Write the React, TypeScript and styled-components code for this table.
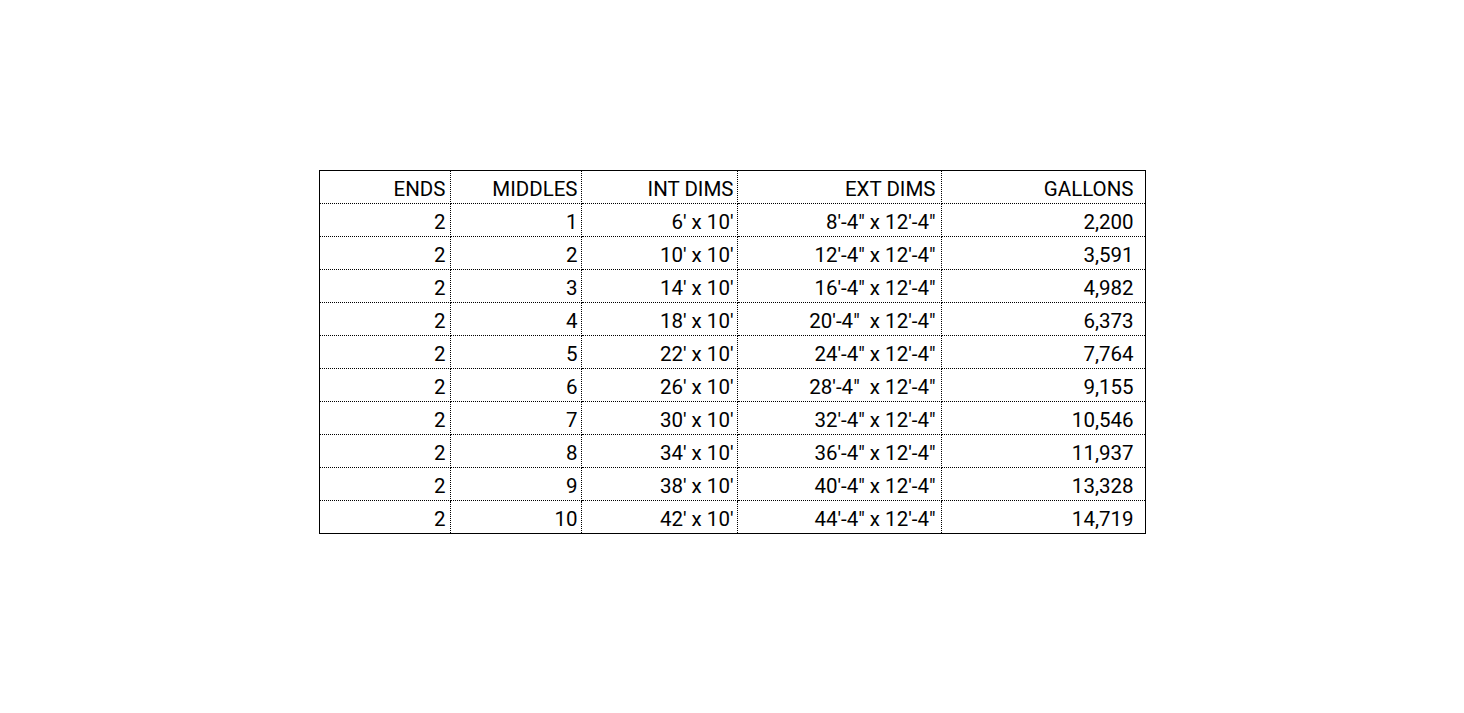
import React from 'react';
import styled, {createGlobalStyle} from 'styled-components';

const GlobalStyle = createGlobalStyle`
  html, body {
    margin: 0;
    padding: 0;
    background: #ffffff;
  }
`

type RowType = [string, string, string, string, string]

const header: RowType = ['ENDS', 'MIDDLES', 'INT DIMS', 'EXT DIMS', 'GALLONS']

const rows: RowType[] = [
    ['2', '1', "6' x 10'", `8'-4" x 12'-4"`, '2,200'],
    ['2', '2', "10' x 10'", `12'-4" x 12'-4"`, '3,591'],
    ['2', '3', "14' x 10'", `16'-4" x 12'-4"`, '4,982'],
    ['2', '4', "18' x 10'", `20'-4"  x 12'-4"`, '6,373'],
    ['2', '5', "22' x 10'", `24'-4" x 12'-4"`, '7,764'],
    ['2', '6', "26' x 10'", `28'-4"  x 12'-4"`, '9,155'],
    ['2', '7', "30' x 10'", `32'-4" x 12'-4"`, '10,546'],
    ['2', '8', "34' x 10'", `36'-4" x 12'-4"`, '11,937'],
    ['2', '9', "38' x 10'", `40'-4" x 12'-4"`, '13,328'],
    ['2', '10', "42' x 10'", `44'-4" x 12'-4"`, '14,719'],
]

const widths = [131, 131, 156, 204, 204]
const pads = [4, 3, 3, 5, 11]

const Page = styled.div`
  display: flex;
  justify-content: center;
  align-items: flex-start;
  padding-top: 170px;
  height: 713px;
  box-sizing: border-box;
`

const Sheet = styled.table`
  border-collapse: collapse;
  table-layout: fixed;
  border: 1px solid #000;
  font-family: Roboto, "Liberation Sans", sans-serif;
  font-size: 20.5px;
  color: #000;
`

const Cell = styled.td<{ $pad: number }>`
  height: 33px;
  padding: 4px ${p => p.$pad}px 0 0;
  box-sizing: border-box;
  text-align: right;
  white-space: pre;
  line-height: 28px;
  border: 1px dotted #000;
`

export default function App() {
    return (
        <>
            <GlobalStyle/>
            <Page>
                <Sheet>
                    <colgroup>
                        {widths.map((w, i) => <col key={i} style={{width: w}}/>)}
                    </colgroup>
                    <tbody>
                    {[header, ...rows].map((row, r) => (
                        <tr key={r}>
                            {row.map((val, c) => <Cell key={c} $pad={pads[c]}>{val}</Cell>)}
                        </tr>
                    ))}
                    </tbody>
                </Sheet>
            </Page>
        </>
    );
}
